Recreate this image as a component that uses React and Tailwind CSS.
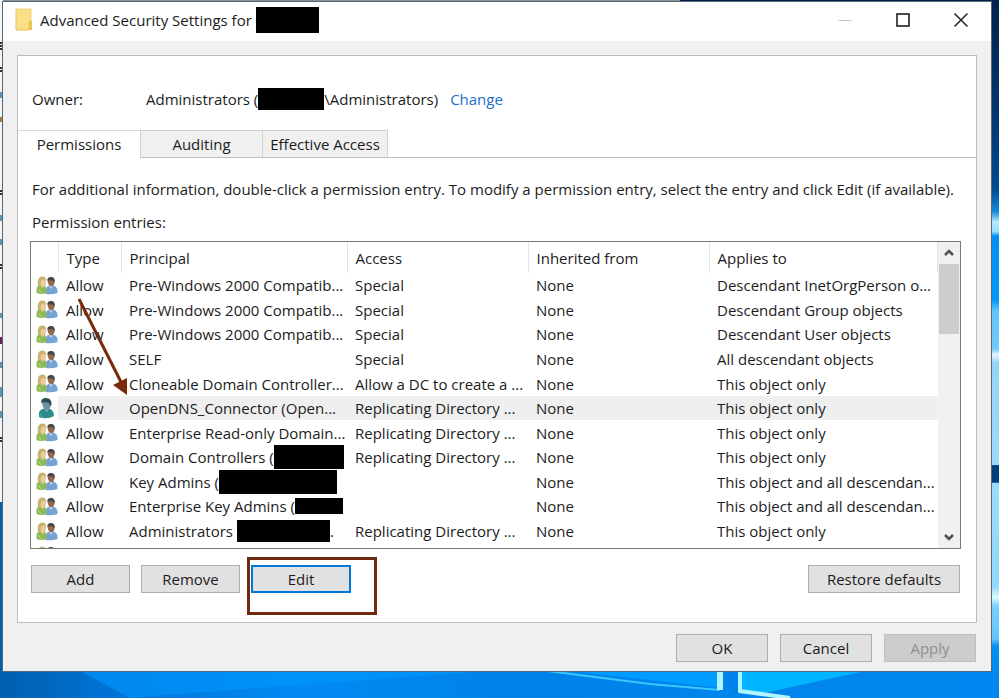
const GROUP = "group";
const USER = "user";

const entries = [
  { icon: GROUP, principal: "Pre-Windows 2000 Compatib...", access: "Special", applies: "Descendant InetOrgPerson o..." },
  { icon: GROUP, principal: "Pre-Windows 2000 Compatib...", access: "Special", applies: "Descendant Group objects" },
  { icon: GROUP, principal: "Pre-Windows 2000 Compatib...", access: "Special", applies: "Descendant User objects" },
  { icon: GROUP, principal: "SELF", access: "Special", applies: "All descendant objects" },
  { icon: GROUP, principal: "Cloneable Domain Controller...", access: "Allow a DC to create a ...", applies: "This object only" },
  { icon: USER, principal: "OpenDNS_Connector (Open...", access: "Replicating Directory ...", applies: "This object only", selected: true },
  { icon: GROUP, principal: "Enterprise Read-only Domain...", access: "Replicating Directory ...", applies: "This object only" },
  { icon: GROUP, principal: "Domain Controllers (", mask: "w-[70px] h-6", access: "Replicating Directory ...", applies: "This object only" },
  { icon: GROUP, principal: "Key Admins (", mask: "w-[118px] h-6", access: "", applies: "This object and all descendan..." },
  { icon: GROUP, principal: "Enterprise Key Admins (", mask: "w-12 h-4", access: "", applies: "This object and all descendan..." },
  { icon: GROUP, principal: "Administrators", mask: "w-[93px] h-[22px] ml-1", after: ".", access: "Replicating Directory ...", applies: "This object only" },
];

const columns = ["Type", "Principal", "Access", "Inherited from", "Applies to"];

function Wallpaper() {
  return (
    <svg className="absolute inset-0 h-full w-full" viewBox="0 0 999 698" preserveAspectRatio="none" aria-hidden="true">
      <defs>
        <linearGradient id="floor" x1="0" x2="1">
          <stop offset="0" stopColor="#005fae" />
          <stop offset="0.12" stopColor="#0074d8" />
          <stop offset="0.3" stopColor="#008af2" />
          <stop offset="0.5" stopColor="#0083e8" />
          <stop offset="1" stopColor="#0086ee" />
        </linearGradient>
        <linearGradient id="edge" x1="0" x2="0" y1="0" y2="1">
          <stop offset="0" stopColor="#03234c" />
          <stop offset="0.16" stopColor="#02366f" />
          <stop offset="0.27" stopColor="#004a90" />
          <stop offset="0.303" stopColor="#1489dc" />
          <stop offset="0.318" stopColor="#b5ecff" />
          <stop offset="0.332" stopColor="#8fdcff" />
          <stop offset="0.338" stopColor="#0090f4" />
          <stop offset="0.43" stopColor="#0098fc" />
          <stop offset="0.445" stopColor="#5fc4fc" />
          <stop offset="0.5" stopColor="#74cbfa" />
          <stop offset="0.508" stopColor="#e4f6ff" />
          <stop offset="0.52" stopColor="#94d5fb" />
          <stop offset="0.666" stopColor="#9cd9fb" />
          <stop offset="0.667" stopColor="#003f7c" />
          <stop offset="0.691" stopColor="#003f7c" />
          <stop offset="0.692" stopColor="#9bdcfd" />
          <stop offset="0.84" stopColor="#90d8fd" />
          <stop offset="0.856" stopColor="#d9fbff" />
          <stop offset="0.868" stopColor="#79d2ff" />
          <stop offset="0.915" stopColor="#62c4fc" />
          <stop offset="0.926" stopColor="#0090f5" />
          <stop offset="1" stopColor="#0086ee" />
        </linearGradient>
      </defs>
      <rect width="999" height="698" fill="url(#floor)" />
      <path d="M80 671 H490 L230 690 L130 698Z" fill="#0098ff" opacity="0.6" />
      <path d="M570 671 L720 671 V688Z" fill="#009cff" />
      <path d="M548 671 L650 684 L720 690" fill="none" stroke="#38c8ff" strokeWidth="2" />
      <path d="M740 671 H865 L760 694 H740Z" fill="#00b4ff" />
      <path d="M720 671 V690" stroke="#b0f4ff" strokeWidth="6" />
      <path d="M740 671 V691 L790 698" fill="none" stroke="#b0f4ff" strokeWidth="4" />
      <rect x="991" width="8" height="698" fill="url(#edge)" />
      <rect width="680" height="2" fill="#8b9095" />
      <rect x="680" width="319" height="2" fill="#03234c" />
      <rect width="3" height="502" fill="#f4f4f4" />
      <path d="M1 42V50 M1 67V73 M1 190V196 M1 264V270 M1 437V443" stroke="#333" strokeWidth="2" strokeDasharray="2 1" />
      <path d="M1 92V98 M1 215V221 M1 239V245 M1 313V318 M1 362V368 M1 387V397 M1 411V418" stroke="#5d93b4" strokeWidth="2" />
      <path d="M1 337V344" stroke="#6b2050" strokeWidth="2" />
      <path d="M1 117V122" stroke="#a87a3c" strokeWidth="2" />
    </svg>
  );
}

function FolderIcon() {
  return (
    <svg className="h-6 w-[18px] shrink-0" viewBox="0 0 18 24" aria-hidden="true">
      <path d="M1 1H16V12H17V22H1Z" fill="#fbdf84" />
      <path d="M1 1H16V12" fill="none" stroke="#f3d57a" />
      <path d="M1 1V22H14" fill="none" stroke="#e9c45c" />
      <path d="M13.500 22V14L16 12L17 13V22Z" fill="#edc451" />
    </svg>
  );
}

function GroupIcon() {
  return (
    <svg className="block h-[19px] w-[22px]" viewBox="0 0 22 19" aria-hidden="true">
      <path d="M9.500 18V14Q10 10.500 13 9.500H17Q21.500 10.500 21.500 15V17Q16 19 9.500 18Z" fill="#75a3d6" />
      <path d="M13 9.500L15 13L17 9.500Z" fill="#d7e5f5" />
      <path d="M11.500 4.500Q11.500 1.500 15 1.500Q19 1.500 18.500 6Q18 10.500 15 10.500Q12 9.500 11.500 4.500Z" fill="#94694c" />
      <path d="M11.500 4.500Q11 1 15 1Q19.500 1 18.500 6.500L17.500 5.500L16 4Q13 4.500 11.500 4.500Z" fill="#45474b" />
      <path d="M0.500 17V13Q0.500 10 4 9.500H8Q11 10.500 10.500 17Q5 19 0.500 17Z" fill="#8dba55" />
      <path d="M2 10Q0.500 1 6 0.500Q11 0.500 10 6L9 10.500L6 11Z" fill="#c8b36a" />
      <path d="M5.500 4L9.500 3.500Q10.500 8 8.500 9.500L7 12L5 10Q4 7 5.500 4Z" fill="#e8cba2" />
      <path d="M2 13L5 17" stroke="#b8d98c" />
    </svg>
  );
}

function UserIcon() {
  return (
    <svg className="block h-[22px] w-[22px]" viewBox="0 0 22 22" aria-hidden="true">
      <path d="M3 20V16Q3 13 8 11.500H13Q18 13 18 19Q11 23 3 20Z" fill="#2c8c8c" />
      <path d="M8 11.500L11 15L13 11.500Z" fill="#8bd0d0" />
      <path d="M6 6Q6 2 10.500 2Q15 2 15 7Q14 13.500 10.500 13.500Q7 12 6 6Z" fill="#70909e" />
      <path d="M5 6Q5 1 10 1Q16 1 15.500 8L14 9L13 6L8 5Z" fill="#2f4b59" />
      <path d="M4 17L7 20" stroke="#58b3b0" />
    </svg>
  );
}

function CaptionButton({ label, children }) {
  return (
    <button type="button" aria-label={label} className="flex w-[58px] items-center justify-center pb-1">
      <svg className="h-4 w-4" viewBox="0 0 16 16" fill="none" aria-hidden="true">{children}</svg>
    </button>
  );
}

function PushButton({ className, children, ...rest }) {
  return (
    <button type="button" className={`flex h-7 items-center justify-center ${className}`} {...rest}>
      {children}
    </button>
  );
}

const plain = "border border-[#adadad] bg-[#e1e1e1]";

function EntryTable() {
  return (
    <table className="h-[326px] w-full table-fixed border-collapse text-left">
      <colgroup>
        <col className="w-[27px]" />
        <col className="w-[63px]" />
        <col className="w-[226px]" />
        <col className="w-[181px]" />
        <col className="w-[181px]" />
        <col />
      </colgroup>
      <thead>
        <tr className="h-[31px]">
          <th className="border-r border-[#e5e5e5] p-0" aria-label="Kind" />
          {columns.map((name) => (
            <th key={name} scope="col" className="border-r border-[#e5e5e5] p-0 pl-2 font-normal">{name}</th>
          ))}
        </tr>
      </thead>
      <tbody>
        {entries.map((e, i) => (
          <tr key={i} className={e.selected ? "bg-[#efefef]" : ""}>
            <td className="bg-white p-0 pl-[5px]">
              <div className="flex h-5 items-center">{e.icon === USER ? <UserIcon /> : <GroupIcon />}</div>
            </td>
            <td className="p-0 pl-2">Allow</td>
            <td className="p-0 pl-2">
              <div className="flex h-5 items-center">
                {e.principal}
                {e.mask && <span className={`shrink-0 bg-black ${e.mask}`} />}
                {e.after}
              </div>
            </td>
            <td className="p-0 pl-2">{e.access}</td>
            <td className="p-0 pl-2">None</td>
            <td className="p-0 pl-2">{e.applies}</td>
          </tr>
        ))}
        <tr>
          <td className="p-0 pl-[5px]"><div className="flex h-5 items-center"><GroupIcon /></div></td>
          <td colSpan={5} />
        </tr>
      </tbody>
    </table>
  );
}

function ScrollBar() {
  return (
    <div className="flex w-[22px] shrink-0 flex-col bg-[#f0f0f0] px-px">
      <button type="button" aria-label="Scroll up" className="flex h-[22px] items-center justify-center">
        <svg className="h-3 w-3" viewBox="0 0 12 12" aria-hidden="true"><path d="M2 8L6 4L10 8" fill="none" stroke="#505050" strokeWidth="2.500" /></svg>
      </button>
      <div className="h-[70px] bg-[#cdcdcd]" />
      <div className="grow" />
      <button type="button" aria-label="Scroll down" className="flex h-[22px] items-center justify-center">
        <svg className="h-3 w-3" viewBox="0 0 12 12" aria-hidden="true"><path d="M2 4L6 8L10 4" fill="none" stroke="#505050" strokeWidth="2.500" /></svg>
      </button>
    </div>
  );
}

export default function App() {
  return (
    <div className="relative min-h-screen overflow-hidden pt-px pr-[7px] pb-[26px] pl-0.5 font-['Open_Sans','Noto_Sans',sans-serif] text-[15px] leading-5 whitespace-nowrap text-[#1c1c1c]">
      <Wallpaper />
      <main className="relative border border-[#566878] bg-[#f0f0f0]">
        <header className="flex h-[39px] items-stretch bg-white pr-px pl-3">
          <div className="flex grow items-center pb-1">
            <FolderIcon />
            <h1 className="ml-[7px]">Advanced Security Settings for</h1>
            <span className="ml-1 h-[26px] w-[63px] bg-black" />
          </div>
          <CaptionButton label="Minimize"><path d="M1.500 8.500H14.500" stroke="#c4c4c4" /></CaptionButton>
          <CaptionButton label="Maximize"><rect x="2" y="2" width="12" height="12" stroke="#111" strokeWidth="1.500" /></CaptionButton>
          <CaptionButton label="Close"><path d="M1.500 1.500L14.500 14.500M14.500 1.500L1.500 14.500" stroke="#222" strokeWidth="1.500" /></CaptionButton>
        </header>

        <div className="px-3.5 pt-3.5 pb-[9px]">
          <section className="border border-[#bcbcbc] bg-white">
            <div className="flex items-center pt-8 pb-5 pl-3.5 leading-[22px]">
              <span className="w-[114px]">Owner:</span>
              <span>Administrators (</span>
              <span className="h-[22px] w-[66px] bg-black" />
              <span>\Administrators)</span>
              <a href="#change" className="ml-3 text-[#1a6fc9]">Change</a>
            </div>

            <div role="tablist" className="flex h-7">
              <button type="button" role="tab" aria-selected="true" className="w-[122px] border-y border-t-[#d9d9d9] border-b-transparent">Permissions</button>
              <button type="button" role="tab" aria-selected="false" className="w-[123px] border border-[#d0d0d0] border-b-[#bcbcbc] bg-[#f0f0f0]">Auditing</button>
              <button type="button" role="tab" aria-selected="false" className="w-[125px] border border-l-0 border-[#d0d0d0] border-b-[#bcbcbc] bg-[#f0f0f0]">Effective Access</button>
              <div className="grow border-b border-[#bcbcbc]" />
            </div>

            <div role="tabpanel" className="pt-5 pr-[15px] pb-[29px] pl-3">
              <p className="pl-0.5 leading-[22px]">
                For additional information, double-click a permission entry. To modify a permission entry, select the entry and click Edit (if available).
              </p>
              <p className="mt-[11px] pl-0.5 leading-[22px]">Permission entries:</p>

              <div className="relative mt-2 flex h-[308px] border border-[#7a7a7a]">
                <div className="grow overflow-hidden"><EntryTable /></div>
                <ScrollBar />
                <svg className="absolute top-14 left-11 h-[100px] w-[60px]" viewBox="0 0 60 100" aria-hidden="true">
                  <path d="M4 1L46 84" stroke="#7a2a0c" strokeWidth="3" />
                  <path d="M52 97L38 87L52 80Z" fill="#7a2a0c" />
                </svg>
              </div>

              <div className="mt-4 flex gap-[11px] px-px">
                <PushButton className={`w-[99px] ${plain}`}>Add</PushButton>
                <PushButton className={`w-[99px] ${plain}`}>Remove</PushButton>
                <div className="relative grow">
                  <PushButton className="w-[100px] border-2 border-[#0078d7] bg-[#e1e1e1]">Edit</PushButton>
                  <div className="pointer-events-none absolute -top-2 -left-1 h-[58px] w-[130px] border-3 border-[#6e2a10]" />
                </div>
                <PushButton className={`w-[152px] ${plain}`}>Restore defaults</PushButton>
              </div>
            </div>
          </section>

          <footer className="mt-[11px] flex justify-end gap-3 pr-px">
            <PushButton className={`w-[92px] ${plain}`}>OK</PushButton>
            <PushButton className={`w-[92px] ${plain}`}>Cancel</PushButton>
            <PushButton className="w-[92px] border border-[#bfbfbf] bg-[#cccccc] text-[#8f8f8f]" disabled>Apply</PushButton>
          </footer>
        </div>
      </main>
    </div>
  );
}
